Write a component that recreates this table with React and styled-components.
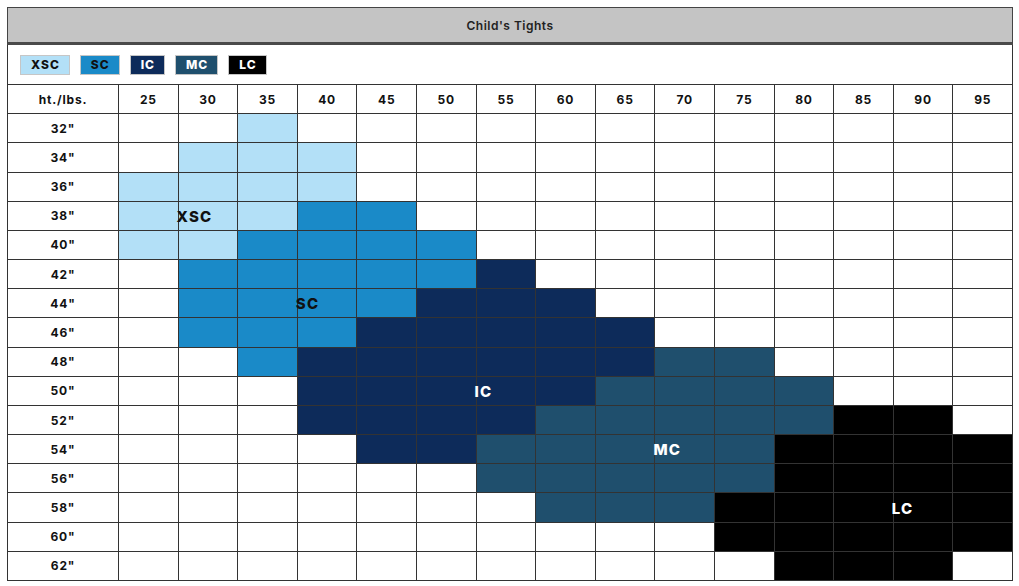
import React from "react";
import styled, { createGlobalStyle } from "styled-components";

const Global = createGlobalStyle`
  html, body { margin: 0; padding: 0; background: #fff; }
  body { padding: 7px; font-family: Inter, "Noto Sans", "DejaVu Sans", sans-serif; }
`;

const COLORS = {
  XSC: { bg: "#b3e0f7", fg: "#111" },
  SC: { bg: "#1a8ac8", fg: "#111" },
  IC: { bg: "#0d2b5a", fg: "#fff" },
  MC: { bg: "#1f4f6d", fg: "#fff" },
  LC: { bg: "#000000", fg: "#fff" },
};

const weights = [25, 30, 35, 40, 45, 50, 55, 60, 65, 70, 75, 80, 85, 90, 95];

// each row: spans of [size, fromIndex, toIndex]
const rows = [
  { h: 32, spans: [["XSC", 2, 2]] },
  { h: 34, spans: [["XSC", 1, 3]] },
  { h: 36, spans: [["XSC", 0, 3]] },
  { h: 38, spans: [["XSC", 0, 2], ["SC", 3, 4]], label: ["XSC", 1] },
  { h: 40, spans: [["XSC", 0, 1], ["SC", 2, 5]] },
  { h: 42, spans: [["SC", 1, 5], ["IC", 6, 6]] },
  { h: 44, spans: [["SC", 1, 4], ["IC", 5, 7]], label: ["SC", 3] },
  { h: 46, spans: [["SC", 1, 3], ["IC", 4, 8]] },
  { h: 48, spans: [["SC", 2, 2], ["IC", 3, 8], ["MC", 9, 10]] },
  { h: 50, spans: [["IC", 3, 7], ["MC", 8, 11]], label: ["IC", 6] },
  { h: 52, spans: [["IC", 3, 6], ["MC", 7, 11], ["LC", 12, 13]] },
  { h: 54, spans: [["IC", 4, 5], ["MC", 6, 10], ["LC", 11, 14]], label: ["MC", 9] },
  { h: 56, spans: [["MC", 6, 10], ["LC", 11, 14]] },
  { h: 58, spans: [["MC", 7, 9], ["LC", 10, 14]], label: ["LC", 13] },
  { h: 60, spans: [["LC", 10, 14]] },
  { h: 62, spans: [["LC", 11, 13]] },
];

const sizeAt = (row, i) => {
  for (const [s, a, b] of row.spans) if (i >= a && i <= b) return s;
  return null;
};

const Chart = styled.div`
  width: 1006px;
  color: #111;
`;

const TitleBar = styled.div`
  height: 34px;
  background: #c4c4c4;
  border: 1px solid #444;
  border-bottom: 3px solid #4a4a4a;
  display: flex;
  align-items: center;
  justify-content: center;
  font-size: 12px;
  font-weight: 600;
  letter-spacing: 0.5px;
  color: #222;
`;

const Legend = styled.div`
  height: 39px;
  border-left: 1px solid #333;
  border-right: 1px solid #333;
  display: flex;
  align-items: center;
  gap: 10px;
  padding-left: 12px;
`;

const Swatch = styled.div`
  height: 18px;
  padding: 0 9px 0 10px;
  display: flex;
  align-items: center;
  border: 1px solid #c6c6c6;
  background: ${(p) => COLORS[p.$size].bg};
  color: ${(p) => COLORS[p.$size].fg};
  font-size: 12px;
  font-weight: 800;
  letter-spacing: 1px;
`;

const Grid = styled.div`
  display: grid;
  grid-template-columns: 110px repeat(15, 1fr);
  grid-auto-rows: 1fr;
  height: 497px;
  gap: 1px;
  padding: 1px;
  box-sizing: border-box;
  background: #333;
`;

const Cell = styled.div`
  position: relative;
  display: flex;
  align-items: center;
  justify-content: center;
  background: ${(p) => (p.$size ? COLORS[p.$size].bg : "#fff")};
  font-size: 12px;
  font-weight: 700;
  letter-spacing: 0.8px;
  color: #111;
`;

const SizeLabel = styled.span`
  position: absolute;
  left: -2px;
  top: 50%;
  transform: translateY(-45%);
  font-size: 15px;
  font-weight: 800;
  letter-spacing: 1.2px;
  white-space: nowrap;
  color: ${(p) => COLORS[p.$size].fg};
  z-index: 2;
`;

export default function App() {
  return (
    <Chart>
      <Global />
      <TitleBar>Child's Tights</TitleBar>
      <Legend>
        {Object.keys(COLORS).map((s) => (
          <Swatch key={s} $size={s}>{s}</Swatch>
        ))}
      </Legend>
      <Grid>
        <Cell>ht./lbs.</Cell>
        {weights.map((w) => (
          <Cell key={w}>{w}</Cell>
        ))}
        {rows.map((row) => (
          <React.Fragment key={row.h}>
            <Cell>{row.h}"</Cell>
            {weights.map((w, i) => {
              const s = sizeAt(row, i);
              const lab = row.label && row.label[1] === i ? row.label[0] : null;
              return (
                <Cell key={w} $size={s}>
                  {lab && <SizeLabel $size={lab}>{lab}</SizeLabel>}
                </Cell>
              );
            })}
          </React.Fragment>
        ))}
      </Grid>
    </Chart>
  );
}
